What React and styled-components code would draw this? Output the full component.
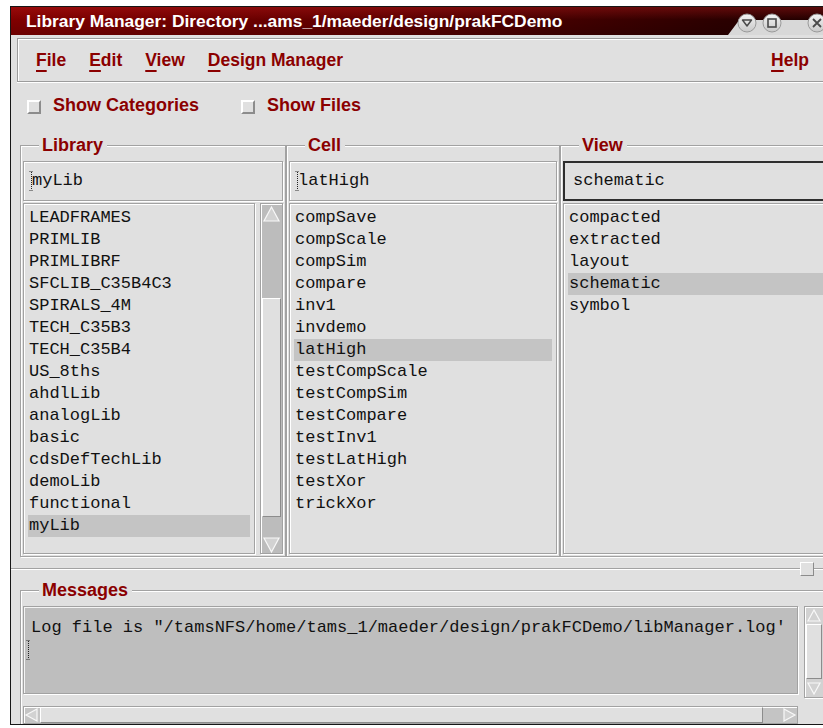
import React from 'react';
import styled, { createGlobalStyle } from 'styled-components';

const FACE = '#e0e0e0';
const RED = '#8b0000';
const SHADE = '#a2a2a2';
const MONO = '"Liberation Mono", "DejaVu Sans Mono", monospace';
const SANS = '"Liberation Sans", Arial, sans-serif';

const PageStyle = createGlobalStyle`
  html, body { margin: 0; padding: 0; background: #ffffff; overflow: hidden; }
  body { font-family: ${SANS}; }
`;

const Window = styled.div`
  box-sizing: border-box;
  margin: 6px 0 0 10px;
  width: 830px;
  height: 719px;
  border: 1px solid #161616;
  border-right: none;
  background: ${FACE};
  display: flex;
  flex-direction: column;
  overflow: hidden;
`;

const TitleBar = styled.header`
  flex: none;
  height: 28px;
  display: flex;
  align-items: stretch;
  background:
    linear-gradient(to bottom, rgba(200, 30, 30, 0.35), rgba(0, 0, 0, 0) 45%, rgba(0, 0, 0, 0.15)),
    linear-gradient(to right, #800000, #5e0000 45%, #2c0000 85%, #200000);
`;

const TitleText = styled.h1`
  flex: 1;
  margin: 0;
  padding-left: 15px;
  align-self: center;
  color: #ffffff;
  font: 700 17.4px/20px ${SANS};
  white-space: nowrap;
`;

const Body = styled.div`
  flex: 1;
  display: flex;
  flex-direction: column;
  padding: 3px 0 0 6px;
  min-height: 0;
`;

const MenuBar = styled.nav`
  box-sizing: border-box;
  flex: none;
  height: 44px;
  display: flex;
  align-items: center;
  gap: 23px;
  padding: 0 30px 0 18px;
  border: 1px solid #9c9c9c;
  box-shadow: inset 1px 1px 0 #ffffff, 0 1px 0 #ffffff;
`;

const MenuItem = styled.span`
  color: ${RED};
  font: 700 17.5px/20px ${SANS};
  margin-left: ${(p) => (p.$push ? 'auto' : '0')};
`;

const Mnemonic = styled.span`
  text-decoration: underline;
  text-decoration-thickness: 2px;
  text-underline-offset: 4px;
`;

const Options = styled.div`
  flex: none;
  display: flex;
  align-items: center;
  gap: 42px;
  height: 20px;
  margin-top: 13px;
  padding-left: 10px;
`;

const CheckOption = styled.label`
  display: flex;
  align-items: center;
  gap: 12px;
  color: ${RED};
  font: 700 18px/20px ${SANS};
`;

const CheckBox = styled.span`
  box-sizing: border-box;
  width: 14px;
  height: 14px;
  margin-top: 4px;
  background: ${FACE};
  border: 2px solid;
  border-color: #ffffff #8c8c8c #8c8c8c #ffffff;
`;

const Columns = styled.div`
  flex: none;
  display: grid;
  grid-template-columns: 266px 274px 1fr;
  margin: 20px 0 0 3px;
`;

const Frame = styled.section`
  position: relative;
  margin-top: 10px;
  padding: 15px 2px 2px 2px;
  border: 1px solid ${SHADE};
  box-shadow: inset 1px 1px 0 #ffffff, 1px 1px 0 #ffffff;
  display: flex;
  flex-direction: column;
  gap: 2px;
  min-width: 0;
`;

const Legend = styled.h2`
  position: absolute;
  top: -11px;
  left: 18px;
  margin: 0;
  padding: 0 4px 0 3px;
  background: ${FACE};
  color: ${RED};
  font: 700 18px/20px ${SANS};
`;

const Entry = styled.div`
  box-sizing: border-box;
  height: 40px;
  display: flex;
  align-items: center;
  padding-left: ${(p) => (p.$focused ? 8 : 9)}px;
  font: 17px/22px ${MONO};
  color: #111111;
  white-space: nowrap;
  border: ${(p) => (p.$focused ? '2px solid #2e2e2e' : `1px solid ${SHADE}`)};
  box-shadow: ${(p) => (p.$focused ? 'none' : 'inset 1px 1px 0 #ffffff, 1px 1px 0 #ffffff')};
`;

const Caret = styled.svg`
  flex: none;
  width: 5px;
  height: 22px;
  margin: 0 -2px 0 -4px;
`;

const ListRow = styled.div`
  display: flex;
  gap: 5px;
  height: 351px;
`;

const Items = styled.ul`
  box-sizing: border-box;
  flex: 1;
  min-width: 0;
  margin: 0;
  padding: 3px 4px 0 4px;
  list-style: none;
  overflow: hidden;
  border: 1px solid ${SHADE};
  box-shadow: inset 1px 1px 0 #ffffff, 1px 1px 0 #ffffff;
  font: 17px/22px ${MONO};
  color: #111111;
`;

const Item = styled.li`
  padding-left: 1px;
  white-space: nowrap;
  background: ${(p) => (p.$selected ? '#c4c4c4' : 'transparent')};
`;

const VScroll = styled.div`
  box-sizing: border-box;
  flex: none;
  width: ${(p) => p.$w}px;
  display: flex;
  flex-direction: column;
  padding: 1px;
  border: 1px solid ${SHADE};
  box-shadow: inset 1px 1px 0 #ffffff, 1px 1px 0 #ffffff;
  background: ${(p) => p.$trough};
`;

const HScroll = styled.div`
  box-sizing: border-box;
  display: flex;
  height: 18px;
  width: ${(p) => p.$w}px;
  margin-top: 8px;
  border: 1px solid ${SHADE};
  box-shadow: inset 1px 1px 0 #ffffff;
  background: #c4c4c4;
`;

const Gap = styled.div`
  flex: ${(p) => p.$size}px 0 0;
`;

const Thumb = styled.div`
  box-sizing: border-box;
  flex: ${(p) => (p.$size ? `${p.$size}px 0 0` : '1')};
  background: ${FACE};
  border: 1px solid;
  border-color: #ffffff #8c8c8c #8c8c8c #ffffff;
`;

const ArrowSvg = styled.svg`
  flex: none;
  display: block;
`;

function Arrow({ dir, size = 17 }) {
  const s = size;
  const pts = {
    up: `${s / 2},2 ${s - 2},${s - 3} 2,${s - 3}`,
    down: `2,3 ${s - 2},3 ${s / 2},${s - 2}`,
    left: `2,${s / 2} ${s - 3},2 ${s - 3},${s - 2}`,
    right: `3,2 ${s - 2},${s / 2} 3,${s - 2}`,
  }[dir];
  return (
    <ArrowSvg width={s} height={s} viewBox={`0 0 ${s} ${s}`}>
      <polygon points={pts} fill="#d2d2d2" stroke="#f8f8f8" strokeWidth="1.2" />
    </ArrowSvg>
  );
}

const Sash = styled.div`
  flex: none;
  height: 23px;
  display: flex;
  align-items: center;
  margin-left: -6px;
`;

const SashLine = styled.div`
  flex: ${(p) => (p.$w ? `${p.$w}px 0 0` : '1')};
  height: 0;
  border-top: 1px solid ${SHADE};
  border-bottom: 1px solid #ffffff;
`;

const SashHandle = styled.div`
  box-sizing: border-box;
  flex: none;
  width: 14px;
  height: 14px;
  background: ${FACE};
  border: 1px solid;
  border-color: #ffffff #8c8c8c #8c8c8c #ffffff;
`;

const MessagesFrame = styled(Frame)`
  flex: 1;
  margin-left: 3px;
  margin-right: -4px;
  gap: 0;
`;

const MessageRow = styled.div`
  display: flex;
  gap: 6px;
`;

const MessageText = styled.div`
  box-sizing: border-box;
  width: 775px;
  height: 88px;
  padding: 10px 0 0 7px;
  border: 1px solid ${SHADE};
  box-shadow: inset 1px 1px 0 #f4f4f4, 1px 1px 0 #ffffff;
  background: #bebebe;
  font: 17px/22px ${MONO};
  color: #111111;
  white-space: nowrap;
  overflow: hidden;
`;

const CaretLine = styled.div`
  height: 22px;
  display: flex;
  align-items: center;
  margin-left: -1px;
`;

function IBeam() {
  return (
    <Caret viewBox="0 0 5 22">
      <line x1="2.5" y1="2" x2="2.5" y2="20" stroke="#222" strokeWidth="1" strokeDasharray="1 1" />
      <line x1="0.5" y1="1.5" x2="4.5" y2="1.5" stroke="#333" strokeWidth="1" strokeDasharray="1 1" />
      <line x1="0.5" y1="20.5" x2="4.5" y2="20.5" stroke="#333" strokeWidth="1" strokeDasharray="1 1" />
    </Caret>
  );
}

const ControlsSvg = styled.svg`
  flex: none;
  display: block;
`;

function WindowControls() {
  return (
    <ControlsSvg width="112" height="28" viewBox="0 0 112 28">
      <defs>
        <linearGradient id="wcBtn" x1="0" y1="0" x2="0" y2="1">
          <stop offset="0" stopColor="#f4f4f4" />
          <stop offset="1" stopColor="#c8c8c8" />
        </linearGradient>
      </defs>
      <path d="M0 28 L9 16 Q11 13 15 13 L112 13 L112 28 Z" fill="#d8d8d8" />
      {[19, 44, 89].map((cx) => (
        <circle key={cx} cx={cx} cy="16" r="9" fill="url(#wcBtn)" stroke="#9a9a9a" strokeWidth="1" />
      ))}
      <path d="M14.5 13 L23.5 13 L19 19 Z" fill="none" stroke="#4a4a4a" strokeWidth="1.5" strokeLinejoin="round" />
      <rect x="40" y="12" width="8" height="8" fill="none" stroke="#4a4a4a" strokeWidth="1.6" />
      <path d="M85 12 L93 20 M93 12 L85 20" stroke="#4a4a4a" strokeWidth="1.8" />
    </ControlsSvg>
  );
}

const LIBRARIES = [
  'LEADFRAMES', 'PRIMLIB', 'PRIMLIBRF', 'SFCLIB_C35B4C3', 'SPIRALS_4M', 'TECH_C35B3',
  'TECH_C35B4', 'US_8ths', 'ahdlLib', 'analogLib', 'basic', 'cdsDefTechLib', 'demoLib',
  'functional', 'myLib',
];
const CELLS = [
  'compSave', 'compScale', 'compSim', 'compare', 'inv1', 'invdemo', 'latHigh',
  'testCompScale', 'testCompSim', 'testCompare', 'testInv1', 'testLatHigh', 'testXor', 'trickXor',
];
const VIEWS = ['compacted', 'extracted', 'layout', 'schematic', 'symbol'];

const MENUS = [
  { label: 'File' },
  { label: 'Edit' },
  { label: 'View' },
  { label: 'Design Manager' },
  { label: 'Help', push: true },
];

function Menu({ label, push }) {
  return (
    <MenuItem $push={push}>
      <Mnemonic>{label[0]}</Mnemonic>
      {label.slice(1)}
    </MenuItem>
  );
}

function Column({ title, value, items, selected, focused, caret, scroll }) {
  return (
    <Frame>
      <Legend>{title}</Legend>
      <Entry $focused={focused}>
        {caret && <IBeam />}
        {value}
      </Entry>
      <ListRow>
        <Items>
          {items.map((name) => (
            <Item key={name} $selected={name === selected}>
              {name}
            </Item>
          ))}
        </Items>
        {scroll && (
          <VScroll $w={23} $trough="#bcbcbc">
            <Arrow dir="up" size={19} />
            <Gap $size={74} />
            <Thumb $size={219} />
            <Gap $size={18} />
            <Arrow dir="down" size={19} />
          </VScroll>
        )}
      </ListRow>
    </Frame>
  );
}

export default function App() {
  return (
    <>
      <PageStyle />
      <Window>
        <TitleBar>
          <TitleText>Library Manager: Directory ...ams_1/maeder/design/prakFCDemo</TitleText>
          <WindowControls />
        </TitleBar>
        <Body>
          <MenuBar>
            {MENUS.map((m) => (
              <Menu key={m.label} {...m} />
            ))}
          </MenuBar>
          <Options>
            <CheckOption>
              <CheckBox />
              Show Categories
            </CheckOption>
            <CheckOption>
              <CheckBox />
              Show Files
            </CheckOption>
          </Options>
          <Columns>
            <Column title="Library" value="myLib" items={LIBRARIES} selected="myLib" caret scroll />
            <Column title="Cell" value="latHigh" items={CELLS} selected="latHigh" caret />
            <Column title="View" value="schematic" items={VIEWS} selected="schematic" focused />
          </Columns>
          <Sash>
            <SashLine />
            <SashHandle />
            <SashLine $w={26} />
          </Sash>
          <MessagesFrame>
            <Legend>Messages</Legend>
            <MessageRow>
              <MessageText>
                Log file is "/tamsNFS/home/tams_1/maeder/design/prakFCDemo/libManager.log'
                <CaretLine>
                  <IBeam />
                </CaretLine>
              </MessageText>
              <VScroll $w={20} $trough="#d2d2d2">
                <Arrow dir="up" size={16} />
                <Thumb $size={55} />
                <Gap $size={1} />
                <Arrow dir="down" size={16} />
              </VScroll>
            </MessageRow>
            <HScroll $w={775}>
              <Arrow dir="left" size={16} />
              <Thumb />
              <Gap $size={18} />
              <Arrow dir="right" size={16} />
            </HScroll>
          </MessagesFrame>
        </Body>
      </Window>
    </>
  );
}
